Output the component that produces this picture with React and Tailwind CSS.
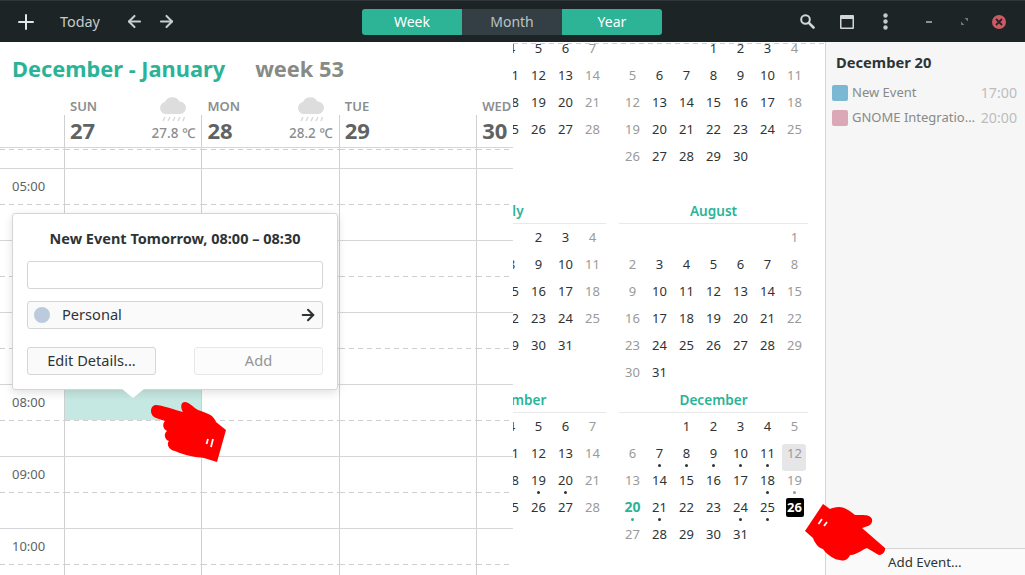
import React from "react";
import { Plus, ArrowLeft, ArrowRight } from "lucide-react";

const dash = "h-px bg-[repeating-linear-gradient(90deg,#cfcfcf_0,#cfcfcf_5px,transparent_5px,transparent_9px)]";

const days = [
  { name: "SUN", num: 27, temp: "27.8 ℃" },
  { name: "MON", num: 28, temp: "28.2 ℃" },
  { name: "TUE", num: 29 },
  { name: "WED", num: 30 },
];

const hours = ["05:00", "06:00", "07:00", "08:00", "09:00", "10:00"];

const months = [
  { title: "March", start: 0, len: 31 },
  { title: "April", start: 3, len: 30 },
  { title: "July", start: 3, len: 31 },
  { title: "August", start: 6, len: 31 },
  { title: "November", start: 0, len: 30, dots: [19, 20] },
  { title: "December", start: 2, len: 31, dots: [7, 8, 9, 10, 11, 18, 19, 21, 24, 25], selected: 12, today: 20, current: 26 },
];

const RainCloud = () => (
  <svg width="28" height="26" viewBox="0 0 28 26">
    <path d="M7 18a6 6 0 0 1-1-11.9A8 8 0 0 1 20.5 5.6 6.2 6.2 0 0 1 21 18Z" fill="#dddddd" />
    <path d="M4 25l2-4M9 25l2-4M14 25l2-4M19 25l2-4M24 25l1.500-4" stroke="#d8d8d8" strokeWidth="1.400" fill="none" />
  </svg>
);

const Hand = ({ className, d, ticks, width, height }) => (
  <svg className={className} width={width} height={height} viewBox={`0 0 ${width} ${height}`}>
    <path d={d} fill="#ff0000" />
    <path d={ticks} stroke="#ffffff" strokeWidth="1.800" fill="none" />
  </svg>
);

const MonthGrid = ({ month }) => {
  const cells = [];
  for (let i = 0; i < month.start; i++) cells.push(null);
  for (let d = 1; d <= month.len; d++) cells.push(d);

  return (
    <div className="w-[189px] h-[189px]">
      <div className="h-[23px] border-b border-[#e8e8e8] text-center text-[13.6px] leading-[20px] font-semibold text-[#2bb398]">
        {month.title}
      </div>
      <div className="pt-1 grid grid-cols-[repeat(7,27px)] auto-rows-[27px]">
        {cells.map((d, i) => {
          const col = i % 7;
          const weekend = col === 0 || col === 6;
          const hasDot = month.dots?.includes(d);
          return (
            <div key={i} className="relative flex justify-center">
              {d === month.selected && (
                <div className="absolute inset-y-0 left-[1px] w-[24px] rounded-[3px] bg-[#e6e6e8]" />
              )}
              {d === month.current ? (
                <span className="relative w-[18px] h-[19px] rounded-[2px] bg-black text-white font-bold text-[13px] leading-[19px] text-center">
                  {d}
                </span>
              ) : d === month.today ? (
                <span className="relative text-[14px] leading-[18px] font-bold text-[#2bb398]">{d}</span>
              ) : (
                <span className={`relative text-[13px] leading-[18px] ${weekend ? "text-[#9a9a9a]" : "text-[#2e3436]"}`}>
                  {d}
                </span>
              )}
              {hasDot && (
                <div className={`absolute top-[20px] w-[3px] h-[3px] rounded-full ${weekend ? "bg-[#999999]" : "bg-[#2e3436]"}`} />
              )}
              {d === month.today && (
                <div className="absolute top-[20px] w-[3px] h-[3px] rounded-full bg-[#2bb398]" />
              )}
            </div>
          );
        })}
      </div>
    </div>
  );
};

const GridRow = ({ label, selectedCol }) => (
  <div className="grid grid-cols-[64px_repeat(4,137.4px)] border-t border-[#d6d6d6] h-[72px]">
    <div>
      <div className="h-[35px] flex items-center pl-3 text-[13px] text-[#5d6466]">{label}</div>
      <div className={dash} />
    </div>
    {[0, 1, 2, 3].map((c) => (
      <div key={c} className="border-l border-[#d0d0d0]">
        <div className={`h-[35px] ${selectedCol === c ? "bg-[#c6e8e2]" : ""}`} />
        <div className={dash} />
      </div>
    ))}
  </div>
);

export default function App() {
  return (
    <div className="relative h-screen w-[1025px] overflow-hidden flex flex-col bg-white font-['Noto_Sans','Open_Sans',sans-serif] text-[#2e3436]">
      <header className="h-[42px] shrink-0 bg-[#1d2426] border-t border-[#30373a] flex items-center">
        <div className="w-[362px] shrink-0 flex items-center">
          <Plus className="ml-[14px] text-[#e4e6e6]" size={24} strokeWidth={2} />
          <span className="ml-[22px] text-[14.4px] text-[#c5cbca]">Today</span>
          <ArrowLeft className="ml-[25px] text-[#c9cdcd]" size={19} strokeWidth={2.6} />
          <ArrowRight className="ml-[13px] text-[#c9cdcd]" size={19} strokeWidth={2.6} />
        </div>
        <div className="w-[300px] h-[26px] flex rounded-[3px] overflow-hidden text-[14px] text-center leading-[26px]">
          <div className="flex-1 bg-[#2db396] text-white">Week</div>
          <div className="flex-1 bg-[#333f44] text-[#bcc4c4]">Month</div>
          <div className="flex-1 bg-[#2db396] text-white">Year</div>
        </div>
        <div className="flex-1 flex items-center justify-end">
          <svg width="15" height="15" viewBox="0 0 15 15">
            <circle cx="5.500" cy="5.500" r="4.300" stroke="#d3d6d6" strokeWidth="2" fill="none" />
            <path d="M8.800 8.800L13.500 13.500" stroke="#d3d6d6" strokeWidth="2.600" strokeLinecap="round" />
          </svg>
          <svg className="ml-[25px]" width="14" height="14" viewBox="0 0 14 14">
            <path d="M0 1a1 1 0 0 1 1-1h12a1 1 0 0 1 1 1v12a1 1 0 0 1-1 1H1a1 1 0 0 1-1-1ZM1.500 4v8.500h11V4Z" fill="#d3d6d6" fillRule="evenodd" />
          </svg>
          <svg className="ml-[29px]" width="5" height="17" viewBox="0 0 5 17">
            <circle cx="2.500" cy="2.500" r="2.200" fill="#c5c9c9" />
            <circle cx="2.500" cy="8.500" r="2.200" fill="#c5c9c9" />
            <circle cx="2.500" cy="14.500" r="2.200" fill="#c5c9c9" />
          </svg>
          <div className="ml-[38px] w-[6px] h-[2px] bg-[#8d9192]" />
          <svg className="ml-[29px]" width="7" height="7" viewBox="0 0 7 7">
            <path d="M3.500 0H7V3.500ZM0 3.500V7H3.500Z" fill="#70777a" />
          </svg>
          <div className="ml-[24px] mr-[19px] w-[14px] h-[14px] rounded-full bg-[#cc5a63] flex items-center justify-center">
            <svg width="8" height="8" viewBox="0 0 8 8">
              <path d="M1 1l6 6M7 1l-6 6" stroke="#2a2526" strokeWidth="1.800" />
            </svg>
          </div>
        </div>
      </header>

      <div className="flex-1 flex min-h-0">
        {/* week view, slid over the year view */}
        <section className="w-[513px] shrink-0 overflow-hidden bg-white">
          <div className="h-[55px] flex items-center pl-3 gap-[30px] whitespace-nowrap font-bold text-[21.8px]">
            <span className="text-[#2bb398]">December - January</span>
            <span className="text-[#888a85]">week 53</span>
          </div>
          <div className="grid grid-cols-[64px_repeat(4,137.4px)] h-[50px]">
            <div />
            {days.map((day) => (
              <div key={day.name}>
                <div className="h-[18px] pl-[6px] pr-[14px] flex justify-between">
                  <span className="text-[13px] leading-[18px] font-semibold text-[#8b8e8f]">{day.name}</span>
                  {day.temp && (
                    <div className="-mt-[1px]">
                      <RainCloud />
                    </div>
                  )}
                </div>
                <div className="h-[32px] border-l border-[#d0d0d0] pl-[5px] pr-[6px] flex justify-between">
                  <span className="text-[22px] leading-[30px] font-bold text-[#5f6364]">{day.num}</span>
                  {day.temp && (
                    <span className="text-[13.5px] leading-[36px] font-medium text-[#8b8e8f]">{day.temp}</span>
                  )}
                </div>
              </div>
            ))}
          </div>
          <div className="grid grid-cols-[64px_repeat(4,137.4px)] border-t border-[#d6d6d6] h-[21px]">
            <div className={`mt-[1px] ${dash}`} />
            {[0, 1, 2, 3].map((c) => (
              <div key={c} className="border-l border-[#d0d0d0]">
                <div className={`mt-[1px] ${dash}`} />
              </div>
            ))}
          </div>
          {hours.map((h, i) => (
            <GridRow key={h} label={h} selectedCol={i === 3 ? 0 : undefined} />
          ))}
        </section>

        {/* year view, only its right side is showing */}
        <section className="flex-1 min-w-0 overflow-hidden flex flex-col items-end pr-[17px]">
          <div className={`mt-px w-[312px] -mr-[17px] shrink-0 ${dash}`} />
          <div className="-mt-[32px] flex flex-wrap justify-end gap-x-[13px] w-[391px] shrink-0">
            {months.map((m) => (
              <MonthGrid key={m.title} month={m} />
            ))}
          </div>
        </section>

        <aside className="w-[200px] shrink-0 border-l border-[#d5d5d5] bg-[#f6f6f6] flex flex-col">
          <div className="flex-1">
            <div className="mt-[10px] pl-[10px] text-[14.7px] leading-[20px] font-bold text-[#2e3436]">December 20</div>
            <div className="mt-[8px] pl-[6px] pr-[8px] flex items-center h-[25px]">
              <div className="w-[16px] h-[16px] rounded-[2px] bg-[#7ab8d4]" />
              <span className="ml-[4px] flex-1 text-[13px] text-[#888a85]">New Event</span>
              <span className="text-[14.2px] text-[#bdbdbd]">17:00</span>
            </div>
            <div className="pl-[6px] pr-[8px] flex items-center h-[25px]">
              <div className="w-[16px] h-[16px] rounded-[2px] bg-[#dba8b8]" />
              <span className="ml-[4px] flex-1 min-w-0 pr-[5px] truncate text-[13px] text-[#888a85]">GNOME Integration Event</span>
              <span className="text-[14.2px] text-[#bdbdbd]">20:00</span>
            </div>
          </div>
          <div className="h-[27px] border-t border-[#d5d5d5] bg-[#fafafa] pl-[62px] text-[13.3px] leading-[27px] text-[#2e3436]">
            Add Event...
          </div>
        </aside>
      </div>

      {/* quick add popover */}
      <div className="absolute left-[12px] top-[213px] w-[326px] h-[177px] bg-white border border-[#d5d5d5] rounded-[3px] shadow-[0_3px_10px_rgba(0,0,0,0.12)] px-[14px] pt-[13px]">
        <div className="text-center text-[14.5px] leading-[22px] font-bold text-[#2e3436] whitespace-nowrap">
          New Event Tomorrow, 08:00 – 08:30
        </div>
        <div className="mt-[12px] h-[28px] border border-[#d5d5d5] rounded-[3px] bg-white" />
        <div className="mt-[12px] h-[28px] border border-[#d5d5d5] rounded-[3px] bg-[#fafafa] flex items-center pl-[6px] pr-[5px]">
          <div className="w-[16px] h-[16px] rounded-full bg-[#bccbdc]" />
          <span className="ml-[12px] flex-1 text-[14.6px] leading-[24px] -mt-[2px]">Personal</span>
          <ArrowRight size={18} strokeWidth={2.8} />
        </div>
        <div className="mt-[18px] flex justify-between">
          <div className="w-[129px] h-[28px] border border-[#d5d5d5] rounded-[3px] bg-[#fafafa] text-center text-[14.6px] leading-[25px]">
            Edit Details...
          </div>
          <div className="w-[129px] h-[28px] border border-[#e8e8e8] rounded-[3px] bg-[#fcfcfc] text-center text-[14.6px] leading-[25px] text-[#929595]">
            Add
          </div>
        </div>
        <div className="absolute left-[109px] top-[175px] w-0 h-0 border-x-[11px] border-x-transparent border-t-[9px] border-t-white" />
      </div>

      <Hand
        className="absolute left-[148px] top-[398px]"
        width="82"
        height="68"
        d="M7 7C10 6 28 12 35 14 32 9 33 4 37 4 41 4 46 10 50 12 58 15 64 16 67 22L68 24 78 32 69 64 56 60C48 59 38 58 27 53 21 52 18 46 21 43 17 42 15 36 19 33 15 31 14 26 17 23L8 20C2 18 1 9 7 7Z"
        ticks="M60 41l-1.500 5M65 41l-2 8"
      />
      <Hand
        className="absolute left-[803px] top-[502px]"
        width="86"
        height="62"
        d="M20 2L2 29 10 36C12 42 16 46 20 47 24 53 32 58 37 58 42 60 46 56 47 53 52 54 60 47 64 46L74 52C78 55 83 50 82 46L59 26C64 24 70 24 69 17 67 12 60 13 52 13 46 8 41 5 36 5 32 5 29 6 27 7Z"
        ticks="M19 17l-3.500 5M24 20l-3 4"
      />
    </div>
  );
}
